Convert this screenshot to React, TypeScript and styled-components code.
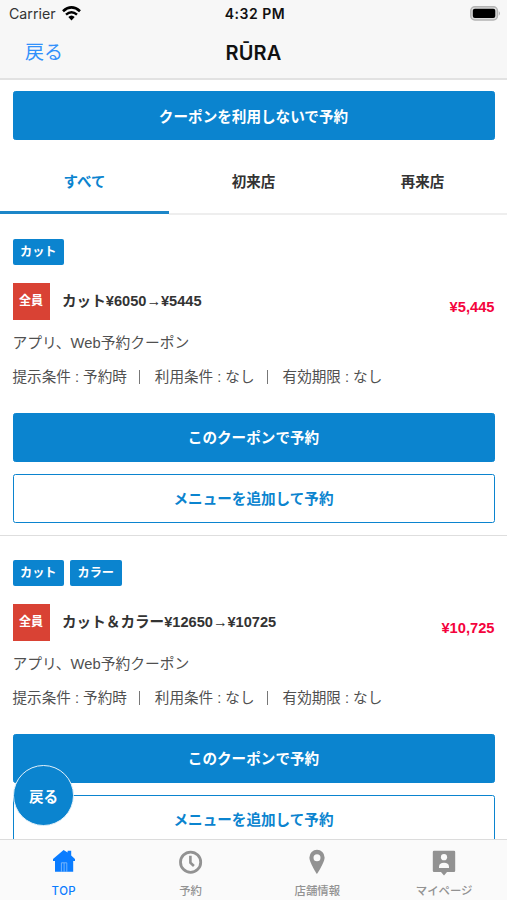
import React from "react";
import styled, { createGlobalStyle, css } from "styled-components";

const BLUE = "#0b84cf";

const GlobalStyle = createGlobalStyle`
  * { box-sizing: border-box; }
  body {
    margin: 0;
    background: #fff;
    color: #333;
    font-family: "Liberation Sans", "Noto Sans CJK JP", sans-serif;
    font-size: 14.6px;
  }
  button { font-family: inherit; cursor: pointer; }
`;

const Screen = styled.div`
  position: relative;
  display: flex;
  flex-direction: column;
  width: 507px;
  height: 900px;
  overflow: hidden;
`;

const Header = styled.header`
  flex: none;
  height: 80px;
  background: #f7f7f7;
  border-bottom: 2px solid #e2e2e2;
  font-family: Inter, "Noto Sans CJK JP", sans-serif;
  color: #111;
`;

const StatusBar = styled.div`
  display: grid;
  grid-template-columns: 1fr auto 1fr;
  align-items: center;
  height: 27px;
  padding: 0 6px 0 9px;
`;

const Carrier = styled.div`
  display: flex;
  align-items: center;
  gap: 6px;
  font-size: 14.2px;
  color: #333;
`;

const Clock = styled.div`
  font-size: 14px;
  font-weight: 600;
  letter-spacing: 0.5px;
`;

const BatteryIcon = styled.svg`
  justify-self: end;
`;

const NavBar = styled.div`
  display: grid;
  grid-template-columns: 1fr auto 1fr;
  align-items: center;
  height: 51px;
  padding: 0 25px;
`;

const NavBack = styled.button`
  justify-self: start;
  border: 0;
  padding: 0;
  background: none;
  color: #3391fb;
  font-size: 19px;
  line-height: 28px;
`;

const NavTitle = styled.h1`
  margin: 0;
  font-size: 20px;
  font-weight: 600;
  letter-spacing: 0.2px;
  line-height: 28px;
`;

const Content = styled.main`
  flex: 1;
  min-height: 0;
  overflow: hidden;
`;

const Action = styled.button<{ $outline?: boolean }>`
  display: block;
  width: 100%;
  height: 49px;
  padding: 0 0 3px;
  border: 1.5px solid ${BLUE};
  border-radius: 2.5px;
  background: ${(p) => (p.$outline ? "#fff" : BLUE)};
  color: ${(p) => (p.$outline ? BLUE : "#fff")};
  font-size: 14.6px;
  font-weight: 700;
`;

const TopAction = styled.div`
  padding: 11px 12.5px 12px;

  ${Action} {
    padding-bottom: 1px;
  }
`;

const Tabs = styled.nav`
  display: grid;
  grid-template-columns: repeat(3, 1fr);
  height: 63px;
  box-shadow: inset 0 -2px #eeeeee;
`;

const Tab = styled.button<{ $active?: boolean }>`
  border: 0;
  padding: 0 0 6px;
  background: none;
  color: ${(p) => (p.$active ? BLUE : "#333")};
  font-size: 14.5px;
  font-weight: 700;
  ${(p) =>
    p.$active &&
    css`
      box-shadow: inset 0 -1px #fff, inset 0 -4px #1c86c8;
    `}
`;

const Card = styled.article`
  height: 321px;
  padding: 24px 12.5px 0;
  border-bottom: 1px solid #dedede;
`;

const Tags = styled.div`
  display: flex;
  gap: 6px;
`;

const Tag = styled.span`
  width: 51.5px;
  height: 26px;
  border-radius: 2px;
  background: ${BLUE};
  color: #fff;
  font-size: 12.2px;
  font-weight: 700;
  line-height: 27px;
  text-align: center;
`;

const Heading = styled.div`
  display: flex;
  align-items: center;
  height: 37px;
  margin-top: 18px;
`;

const Audience = styled.span`
  width: 37px;
  height: 37px;
  margin-right: 12.5px;
  background: #d94234;
  color: #fff;
  font-size: 12px;
  font-weight: 700;
  line-height: 37px;
  text-align: center;
`;

const Title = styled.h2`
  flex: 1;
  margin: 0;
  padding-bottom: 2px;
  font-size: 14.6px;
  font-weight: 700;
  line-height: 22px;
`;

const Arrow = styled.span`
  font-weight: 400;
`;

const Price = styled.strong`
  padding-top: 11px;
  color: #f4033d;
  font-size: 14.7px;
  line-height: 20px;
`;

const Note = styled.p`
  margin: 12px 0 0;
  color: #505050;
  font-size: 14.75px;
  line-height: 22px;
`;

const Terms = styled.div`
  display: flex;
  margin-top: 12px;
  color: #505050;
  line-height: 22px;
`;

const Term = styled.span`
  display: flex;
  align-items: center;
  white-space: pre;

  & + &::before {
    content: "";
    width: 1px;
    height: 14px;
    margin: 0 15px 0 12px;
    background: #777;
  }
`;

const Actions = styled.div`
  display: grid;
  gap: 12px;
  margin-top: 25px;
`;

const FloatingBack = styled.button`
  position: absolute;
  left: 13px;
  top: 765px;
  width: 61px;
  height: 61px;
  padding: 0;
  border: 1.5px solid #e4f2fb;
  border-radius: 50%;
  background: ${BLUE};
  color: #fff;
  font-size: 14.6px;
  font-weight: 700;
`;

const TabBar = styled.footer`
  flex: none;
  display: grid;
  grid-template-columns: repeat(4, 1fr);
  height: 61px;
  border-top: 1.5px solid #dcdcdc;
  background: #fafafa;
`;

const BarItem = styled.a<{ $active?: boolean }>`
  display: flex;
  flex-direction: column;
  align-items: center;
  padding: 8px 0 0 1px;
  color: ${(p) => (p.$active ? "#0a7cff" : "#929292")};
  font-family: Inter, "Noto Sans CJK JP", sans-serif;
  font-size: 11.4px;
  font-weight: 500;
`;

const BarLabel = styled.span`
  margin-top: 9px;
  line-height: 16px;
  letter-spacing: ${(p) => (p.children === "TOP" ? "0.5px" : "0")};
`;

const WifiIcon = () => (
  <svg width="19" height="15" viewBox="0 0 19 15" fill="none" stroke="#000">
    <path d="M1 5.2Q9.5-2.3 18 5.2" strokeWidth="2.7" />
    <path d="M4 8.6Q9.5 3.8 15 8.6" strokeWidth="2.5" />
    <path d="M6.3 11Q9.5 8 12.7 11L9.5 14.4Z" fill="#000" stroke="none" />
  </svg>
);

const Battery = () => (
  <BatteryIcon width="31" height="15" viewBox="0 0 31 15">
    <rect x="0.8" y="0.8" width="26.6" height="13.2" rx="4" fill="#ddd" stroke="#b4b4b4" strokeWidth="1.5" />
    <rect x="2.8" y="2.8" width="22.5" height="9.2" rx="2" fill="#000" />
    <path d="M28.8 5Q31 7.4 28.8 9.8Z" fill="#aaa" />
  </BatteryIcon>
);

const HomeIcon = () => (
  <svg width="26" height="26" viewBox="0 0 26 26" fill="currentColor">
    <path d="M12.6 2L16.6 4.6V2.8H20.2V7.5L24 11V13H22.2V23.8H4V13H2V11Z" />
    <path d="M10.4 23.8V14.8H15.8V23.8M13.1 15V23.8" fill="none" stroke="#8ec2fb" strokeWidth="0.8" />
  </svg>
);

const ClockIcon = () => (
  <svg width="26" height="26" viewBox="0 0 26 26" fill="none" stroke="currentColor">
    <circle cx="12.6" cy="14.2" r="10.1" strokeWidth="2.8" />
    <path d="M12.4 7.8V14.7L15.9 18" strokeWidth="2.6" />
  </svg>
);

const PinIcon = () => (
  <svg width="26" height="26" viewBox="0 0 26 26" fill="currentColor">
    <path fillRule="evenodd" d="M13 1.8A7.6 7.6 0 0 0 5.4 9.4C5.4 14.5 13 26 13 26S20.6 14.5 20.6 9.4A7.6 7.6 0 0 0 13 1.8ZM13 6.2A3.5 3.5 0 1 1 13 13.2A3.5 3.5 0 0 1 13 6.2Z" />
  </svg>
);

const ProfileIcon = () => (
  <svg width="26" height="28" viewBox="0 0 26 28">
    <path d="M3 2.8H23Q24.2 2.8 24.2 4V22.8Q24.2 24 23 24H16L13 27.5L10 24H3Q1.8 24 1.8 22.8V4Q1.8 2.8 3 2.8Z" fill="currentColor" />
    <circle cx="13" cy="9.2" r="3.1" fill="#fafafa" />
    <path d="M8 20V18.4Q8.4 14.7 13 14.7T18 18.4V20Z" fill="#fafafa" />
  </svg>
);

const IconBox = styled.span`
  display: flex;
  height: 26px;
`;

interface Coupon {
  tags: string[];
  name: string;
  before: string;
  after: string;
  price: string;
}

const coupons: Coupon[] = [
  { tags: ["カット"], name: "カット", before: "¥6050", after: "¥5445", price: "¥5,445" },
  { tags: ["カット", "カラー"], name: "カット＆カラー", before: "¥12650", after: "¥10725", price: "¥10,725" },
];

const terms = ["提示条件 : 予約時", "利用条件 : なし", "有効期限 : なし"];

const barItems = [
  { label: "TOP", icon: <HomeIcon />, active: true },
  { label: "予約", icon: <ClockIcon /> },
  { label: "店舗情報", icon: <PinIcon /> },
  { label: "マイページ", icon: <ProfileIcon /> },
];

const CouponCard = ({ coupon }: { coupon: Coupon }) => (
  <Card>
    <Tags>
      {coupon.tags.map((tag) => (
        <Tag key={tag}>{tag}</Tag>
      ))}
    </Tags>
    <Heading>
      <Audience>全員</Audience>
      <Title>
        {coupon.name}
        {coupon.before}
        <Arrow>→</Arrow>
        {coupon.after}
      </Title>
      <Price>{coupon.price}</Price>
    </Heading>
    <Note>アプリ、Web予約クーポン</Note>
    <Terms>
      {terms.map((term) => (
        <Term key={term}>{term}</Term>
      ))}
    </Terms>
    <Actions>
      <Action>このクーポンで予約</Action>
      <Action $outline>メニューを追加して予約</Action>
    </Actions>
  </Card>
);

export default function App() {
  return (
    <Screen lang="ja">
      <GlobalStyle />
      <Header>
        <StatusBar>
          <Carrier>
            Carrier
            <WifiIcon />
          </Carrier>
          <Clock>4:32 PM</Clock>
          <Battery />
        </StatusBar>
        <NavBar>
          <NavBack>戻る</NavBack>
          <NavTitle>RŪRA</NavTitle>
        </NavBar>
      </Header>
      <Content>
        <TopAction>
          <Action>クーポンを利用しないで予約</Action>
        </TopAction>
        <Tabs>
          <Tab $active>すべて</Tab>
          <Tab>初来店</Tab>
          <Tab>再来店</Tab>
        </Tabs>
        {coupons.map((coupon) => (
          <CouponCard key={coupon.price} coupon={coupon} />
        ))}
      </Content>
      <FloatingBack>戻る</FloatingBack>
      <TabBar>
        {barItems.map((item) => (
          <BarItem key={item.label} $active={item.active}>
            <IconBox>{item.icon}</IconBox>
            <BarLabel>{item.label}</BarLabel>
          </BarItem>
        ))}
      </TabBar>
    </Screen>
  );
}
